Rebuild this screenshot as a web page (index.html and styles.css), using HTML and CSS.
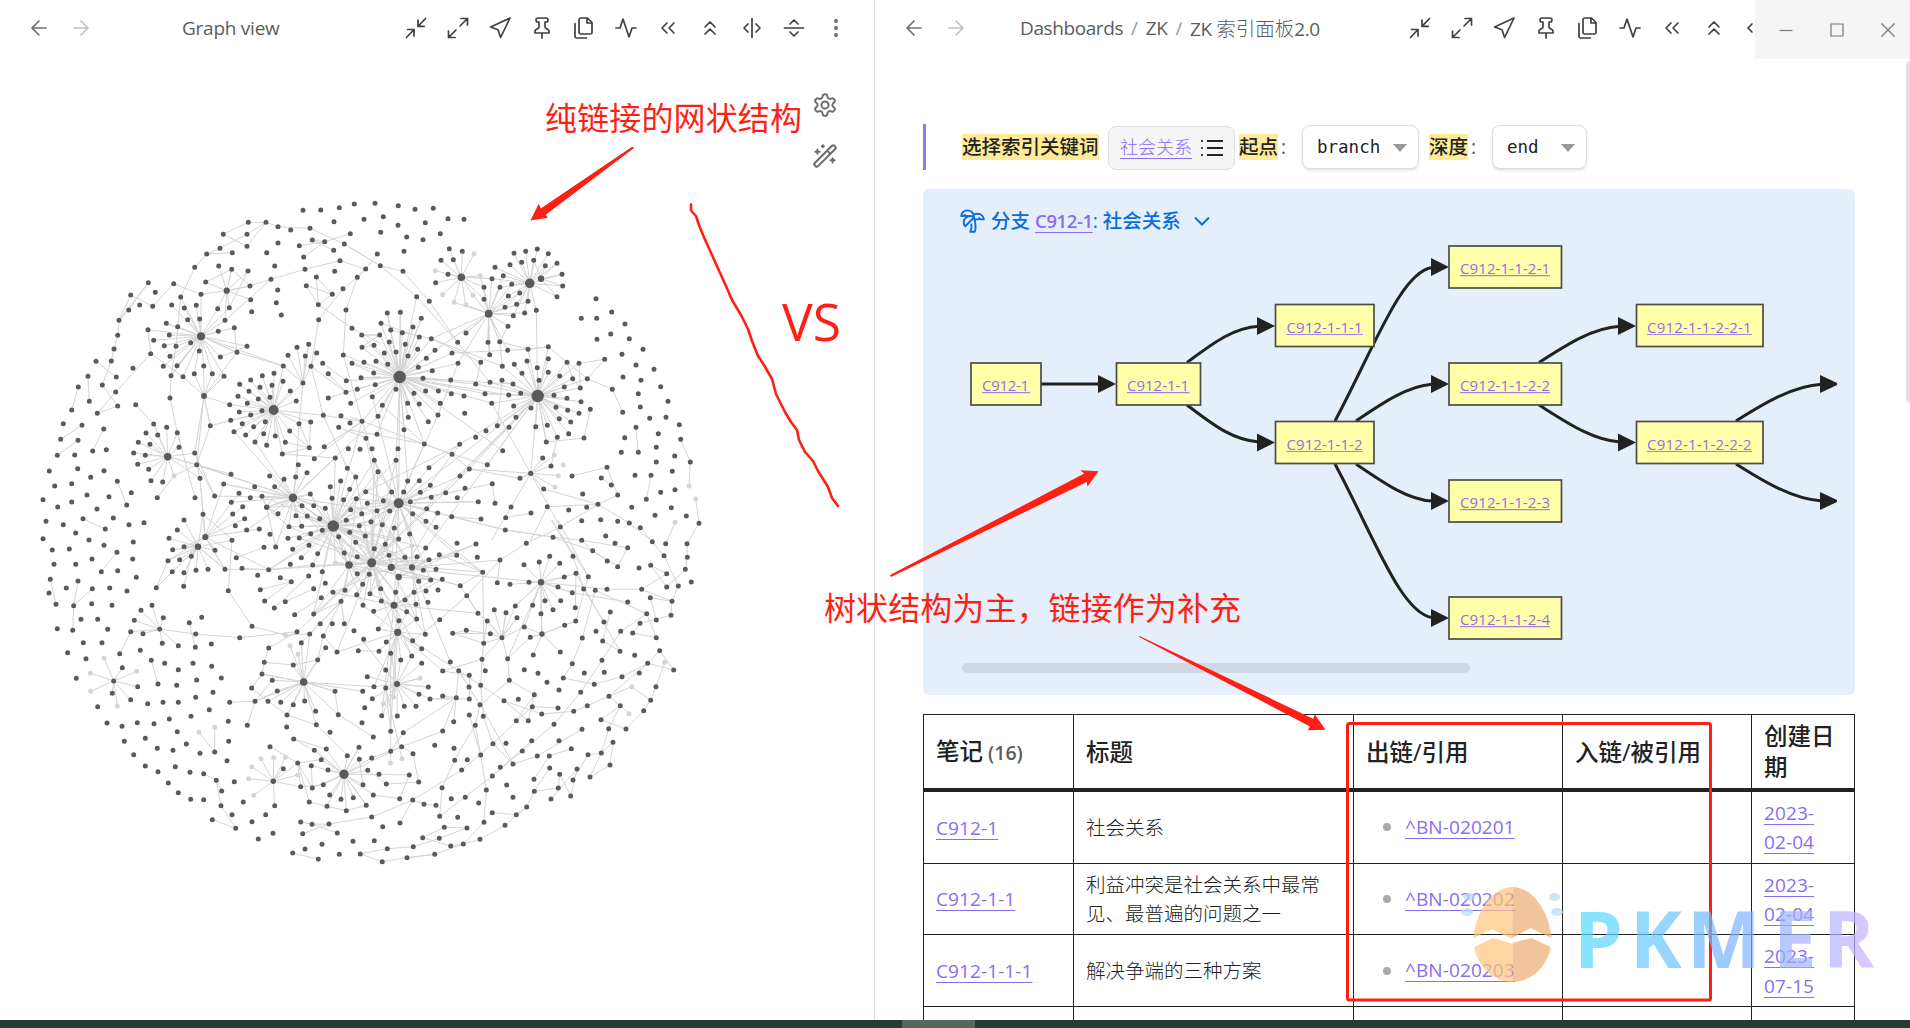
FILE: index.html
```html
<!DOCTYPE html>
<html lang="zh-CN">
<head>
<meta charset="utf-8">
<title>Graph view</title>
<link rel="stylesheet" href="styles.css">
</head>
<body>
<svg class="sprite" aria-hidden="true">
  <symbol id="i-back" viewBox="0 0 24 24"><path d="M19 12H5M12 19l-7-7 7-7"/></symbol>
  <symbol id="i-fwd" viewBox="0 0 24 24"><path d="M5 12h14M12 5l7 7-7 7"/></symbol>
  <symbol id="i-in" viewBox="0 0 24 24"><path d="M14 4v6.3h6.3M14 10.3l7.5-7.8M3.5 13.5H10V20M10 13.5l-7.5 8"/></symbol>
  <symbol id="i-out" viewBox="0 0 24 24"><path d="M15 2.5h6.5V9M21.500 2.500 14 10M9 21.500H2.500V15M2.500 21.500 10 14"/></symbol>
  <symbol id="i-nav" viewBox="0 0 24 24"><path d="M22 2 2.600 11l7.400 2.700 2.600 7.800z"/></symbol>
  <symbol id="i-pin" viewBox="0 0 24 24"><path d="M12 17v5M5 17h14v-1.760a2 2 0 0 0-1.110-1.790l-1.780-.9A2 2 0 0 1 15 10.760V6h1a2 2 0 0 0 0-4H8a2 2 0 0 0 0 4h1v4.760a2 2 0 0 1-1.110 1.790l-1.780.9A2 2 0 0 0 5 15.240Z"/></symbol>
  <symbol id="i-files" viewBox="0 0 24 24"><path d="M15.500 2H8.600c-.4 0-.8.2-1.100.5-.3.3-.5.7-.5 1.100v12.800c0 .4.2.8.5 1.100.3.3.7.5 1.100.5h9.800c.4 0 .8-.2 1.100-.5.3-.3.5-.7.5-1.100V6.500L15.500 2zM3 7.600v12.800c0 .4.2.8.5 1.100.3.3.7.5 1.100.5h9.800M15 2v5h5"/></symbol>
  <symbol id="i-act" viewBox="0 0 24 24"><path d="M22 12h-4l-3 9L9 3l-3 9H2"/></symbol>
  <symbol id="i-left" viewBox="0 0 24 24"><path d="m11 17-5-5 5-5M18 17l-5-5 5-5"/></symbol>
  <symbol id="i-up" viewBox="0 0 24 24"><path d="m17 11-5-5-5 5M17 18l-5-5-5 5"/></symbol>
  <symbol id="i-sh" viewBox="0 0 24 24"><path d="M12 2.500v19M8 8l-4 4 4 4M16 8l4 4-4 4"/></symbol>
  <symbol id="i-sv" viewBox="0 0 24 24"><path d="M2.500 12h19M8 8l4-4 4 4M8 16l4 4 4-4"/></symbol>
  <symbol id="i-dots" viewBox="0 0 24 24"><g fill="currentColor" stroke="none"><circle cx="12" cy="5" r="1.900"/><circle cx="12" cy="12" r="1.900"/><circle cx="12" cy="19" r="1.900"/></g></symbol>
</svg>

<div class="app">
  <div class="panes">
    <section class="pane pane-graph">
      <header class="bar">
        <svg class="ic nav"><use href="#i-back"/></svg>
        <svg class="ic nav off"><use href="#i-fwd"/></svg>
        <span class="title">Graph view</span>
        <div class="actions">
          <svg class="ic"><use href="#i-in"/></svg><svg class="ic"><use href="#i-out"/></svg>
          <svg class="ic"><use href="#i-nav"/></svg><svg class="ic"><use href="#i-pin"/></svg>
          <svg class="ic"><use href="#i-files"/></svg><svg class="ic"><use href="#i-act"/></svg>
          <svg class="ic"><use href="#i-left"/></svg><svg class="ic"><use href="#i-up"/></svg>
          <svg class="ic"><use href="#i-sh"/></svg><svg class="ic"><use href="#i-sv"/></svg>
          <svg class="ic dots"><use href="#i-dots"/></svg>
        </div>
      </header>
      <div class="canvas">
        <svg class="graph" viewBox="0 56 874 964">
          <path id="edges" class="g-edge"/>
          <path id="nodes" class="g-node"/>
          <path id="ghosts" class="g-ghost"/>
        </svg>
        <div class="tools">
          <svg class="tool" viewBox="0 0 24 24"><path d="M12.220 2h-.44a2 2 0 0 0-2 2v.18a2 2 0 0 1-1 1.730l-.43.25a2 2 0 0 1-2 0l-.15-.08a2 2 0 0 0-2.730.73l-.22.38a2 2 0 0 0 .73 2.730l.15.1a2 2 0 0 1 1 1.720v.51a2 2 0 0 1-1 1.740l-.15.09a2 2 0 0 0-.73 2.730l.22.38a2 2 0 0 0 2.730.73l.15-.08a2 2 0 0 1 2 0l.43.25a2 2 0 0 1 1 1.730V20a2 2 0 0 0 2 2h.44a2 2 0 0 0 2-2v-.18a2 2 0 0 1 1-1.730l.43-.25a2 2 0 0 1 2 0l.15.08a2 2 0 0 0 2.730-.73l.22-.39a2 2 0 0 0-.73-2.730l-.15-.08a2 2 0 0 1-1-1.740v-.5a2 2 0 0 1 1-1.740l.15-.09a2 2 0 0 0 .73-2.730l-.22-.38a2 2 0 0 0-2.730-.73l-.15.08a2 2 0 0 1-2 0l-.43-.25a2 2 0 0 1-1-1.730V4a2 2 0 0 0-2-2z"/><circle cx="12" cy="12" r="3.300"/></svg>
          <svg class="tool" viewBox="0 0 24 24"><path d="m21.640 3.640-1.280-1.280a1.210 1.210 0 0 0-1.720 0L2.360 18.640a1.210 1.210 0 0 0 0 1.720l1.280 1.280a1.200 1.200 0 0 0 1.720 0L21.640 5.360a1.200 1.200 0 0 0 0-1.720ZM14 7l3 3M5 6v4M19 14v4M10 2v2M7 8H3M21 16h-4M11 3H9"/></svg>
        </div>
      </div>
    </section>

    <section class="pane pane-note">
      <header class="bar">
        <svg class="ic nav"><use href="#i-back"/></svg>
        <svg class="ic nav off"><use href="#i-fwd"/></svg>
        <span class="crumbs"><span>Dashboards</span><i>/</i><span>ZK</span><i>/</i><span>ZK <em>索引面板</em>2.0</span></span>
        <div class="actions clipped">
          <svg class="ic"><use href="#i-in"/></svg><svg class="ic"><use href="#i-out"/></svg>
          <svg class="ic"><use href="#i-nav"/></svg><svg class="ic"><use href="#i-pin"/></svg>
          <svg class="ic"><use href="#i-files"/></svg><svg class="ic"><use href="#i-act"/></svg>
          <svg class="ic"><use href="#i-left"/></svg><svg class="ic"><use href="#i-up"/></svg>
          <svg class="ic"><use href="#i-sh"/></svg>
        </div>
        <div class="winctl">
          <svg viewBox="0 0 14 14"><path d="M.5 7.500h13"/></svg>
          <svg viewBox="0 0 14 14"><path d="M1 1h12v12H1z"/></svg>
          <svg viewBox="0 0 14 14"><path d="m.5.5 13 13M13.500.5l-13 13"/></svg>
        </div>
      </header>

      <div class="note">
        <div class="quote">
          <mark class="m1">选择索引关键词</mark>
          <div class="picker"><a>社会关系</a><svg viewBox="0 0 24 24"><path d="M7 5h16M7 12h16M7 19h16M1.200 5h1.600M1.200 12h1.600M1.200 19h1.600"/></svg></div>
          <mark class="m2">起点</mark><span class="colon">:</span>
          <div class="select s1">branch<b></b></div>
          <mark class="m3">深度</mark><span class="colon">:</span>
          <div class="select s2">end<b></b></div>
        </div>

        <div class="callout">
          <div class="callout-title">
            <svg class="palm" viewBox="0 0 24 24"><path d="M13 8c0-2.760-2.460-5-5.500-5S2 5.240 2 8h2l1-1 1 1h4M13 7.140A5.820 5.820 0 0 1 16.500 6c3.040 0 5.500 2.240 5.500 5h-3l-1-1-1 1h-3M5.890 9.710c-2.150 2.150-2.300 5.470-.35 7.430l4.240-4.250.7-.7.71-.71 2.120-2.120c-1.950-1.960-5.270-1.800-7.420.35M11 15.500c.5 2.500-.17 4.500-1 6.500h4c2-5.500-.5-12-1-14"/></svg>
            <span class="ct">分支 <a>C912-1</a>: 社会关系</span>
            <svg class="chev" viewBox="0 0 16 10"><path d="m1 1.500 7 7 7-7"/></svg>
          </div>
          <svg class="flow" viewBox="962 240 875 415">
            <g class="f-line">
              <path d="M1041 384H1100"/>
              <path d="M1187 362.500C1212 344 1232 328 1259 326.300"/>
              <path d="M1187 405C1212 424 1232 440 1259 442"/>
              <path d="M1335 421C1374 348 1401 272 1432 267.500"/>
              <path d="M1356 421C1384 402 1408 386 1432 384.300"/>
              <path d="M1356 464C1384 483 1408 500 1432 501"/>
              <path d="M1335 464C1374 537 1401 613 1432 617.500"/>
              <path d="M1539 362.500C1566 345 1592 328 1620 326.300"/>
              <path d="M1539 405C1566 422 1592 440 1620 442"/>
              <path d="M1736 421C1763 404 1792 386 1822 384.300"/>
              <path d="M1736 464C1763 481 1792 499 1822 501"/>
            </g>
            <g class="f-head">
              <path d="M1098 375l18 9-18 9z"/><path d="M1257 317l18 9-18 9z"/><path d="M1257 433.500l18 9-18 9z"/>
              <path d="M1431 258l18 9-18 9z"/><path d="M1431 375l18 9-18 9z"/><path d="M1431 492l18 9-18 9z"/><path d="M1431 609l18 9-18 9z"/>
              <path d="M1618 317l18 9-18 9z"/><path d="M1618 433.500l18 9-18 9z"/>
              <path d="M1820 375l17 8v2l-17 8z"/><path d="M1820 492l17 8v2l-17 8z"/>
            </g>
            <g class="f-box">
              <rect x="971" y="363" width="70" height="42"/><rect x="1116.500" y="363" width="84" height="42"/>
              <rect x="1275.500" y="304.500" width="98.500" height="42"/><rect x="1275.500" y="421.500" width="98.500" height="42"/>
              <rect x="1449" y="246" width="112.500" height="42"/><rect x="1449" y="363" width="112.500" height="42"/>
              <rect x="1449" y="480" width="112.500" height="42"/><rect x="1449" y="597" width="112.500" height="42"/>
              <rect x="1636.500" y="304.500" width="126.500" height="42"/><rect x="1636.500" y="421.500" width="126.500" height="42"/>
            </g>
            <g class="f-text">
              <text x="982" y="391" textLength="47">C912-1</text>
              <text x="1127" y="391" textLength="62">C912-1-1</text>
              <text x="1286.500" y="333" textLength="76">C912-1-1-1</text>
              <text x="1286.500" y="450" textLength="76">C912-1-1-2</text>
              <text x="1460" y="274" textLength="90">C912-1-1-2-1</text>
              <text x="1460" y="391" textLength="90">C912-1-1-2-2</text>
              <text x="1460" y="508" textLength="90">C912-1-1-2-3</text>
              <text x="1460" y="625" textLength="90">C912-1-1-2-4</text>
              <text x="1647" y="333" textLength="104.500">C912-1-1-2-2-1</text>
              <text x="1647" y="450" textLength="104.500">C912-1-1-2-2-2</text>
            </g>
            <path class="f-under" d="M982 392.700h48M1127 392.700h62.500M1286.500 334.500h76.500M1286.500 451.500h76.500M1460 275.700h90M1460 392.700h90M1460 509.700h90M1460 626.700h90M1647 334.500h105M1647 451.500h105"/>
          </svg>
          <div class="hscroll"></div>
        </div>

        <table class="links">
          <colgroup><col class="c1"><col class="c2"><col class="c3"><col class="c4"><col class="c5"></colgroup>
          <thead>
            <tr><th>笔记<small> (16)</small></th><th>标题</th><th>出链/引用</th><th>入链/被引用</th><th>创建日期</th></tr>
          </thead>
          <tbody>
            <tr class="first"><td><a>C912-1</a></td><td>社会关系</td><td><span class="li"><a>^BN-020201</a></span></td><td></td><td><a>2023-<br>02-04</a></td></tr>
            <tr class="short"><td><a>C912-1-1</a></td><td>利益冲突是社会关系中最常见、最普遍的问题之一</td><td><span class="li"><a>^BN-020202</a></span></td><td></td><td><a>2023-<br>02-04</a></td></tr>
            <tr><td><a>C912-1-1-1</a></td><td>解决争端的三种方案</td><td><span class="li"><a>^BN-020203</a></span></td><td></td><td><a>2023-<br>07-15</a></td></tr>
            <tr><td></td><td></td><td></td><td></td><td></td></tr>
          </tbody>
        </table>
      </div>
      <div class="vscroll"></div>
    </section>
  </div>
  <footer class="taskbar"><span></span></footer>
</div>

<svg class="overlay" viewBox="0 0 1910 1028">
  <defs>
    <linearGradient id="pk" gradientUnits="userSpaceOnUse" x1="1580" y1="0" x2="1875" y2="0">
      <stop offset="0" stop-color="#56dcff"/><stop offset=".5" stop-color="#78b4ff"/><stop offset="1" stop-color="#cdb2ff"/>
    </linearGradient>
  </defs>
  <g class="ink">
    <text class="note-text" x="545" y="129.500" textLength="257">纯链接的网状结构</text>
    <text class="note-text" x="824" y="620" textLength="417">树状结构为主，链接作为补充</text>
    <text class="vs" x="782" y="341" textLength="59" lengthAdjust="spacingAndGlyphs">VS</text>
    <path d="M632 147l2 .5-88.500 67.300 2.500 2.900-17.500 2.800 8.200-16.800 2.300 4.800z"/>
    <path d="M632 147l2 1-88.500 66.800-4.500-6.300z"/>
    <path d="M890 575l1 2 195.700-95 .8 4.500 11-15.200-18.200-1 4 3.200z"/>
    <path d="M1139.500 636l-.3 1L1310 726.500l-2.500 3.700 18 -.5-10.800-15.500-1.500 4.500z"/>
    <path class="stroke" d="M691 204.500v6l5 5.500 3 9 4 10 13 29 10 22 6 14 9 15 7 14 4 12 6 15 6 9 8 14 4 15 9 18 6 10 6 8 2 10 6 12 8 9 5 10 5 8 5 8 4 11 6 8"/>
    <rect class="frame" x="1347.500" y="723.500" width="363" height="276.500" rx="2"/>
  </g>
  <g class="mark">
    <path fill="#ffc67c" d="M1512.500 887c-21 0-37 26-39 51l19-9 9 5 11.500 5zM1474 947l19-9 19.500 6v38c-19 0-35-16-38.500-35z"/>
    <path fill="#ecac6f" d="M1512.500 887c21 0 37 26 39 51l-21-10-18 10zM1551 947l-20-9-18.500 5v39c19 0 35-16 38.500-35z"/>
    <g fill="#b4dcf2"><ellipse cx="1469" cy="897" rx="6" ry="4"/><ellipse cx="1467" cy="912" rx="6" ry="4"/><ellipse cx="1554.500" cy="897" rx="5.500" ry="4"/><ellipse cx="1557" cy="912" rx="6" ry="4"/></g>
    <text y="968" fill="url(#pk)" x="1574 1630 1687 1773 1823">PKMER</text>
  </g>
</svg>
<script src="graph.js"></script>
</body>
</html>
```

FILE: styles.css
```css
* { box-sizing: border-box; }
html, body { margin: 0; height: 100%; overflow: hidden; }
body {
  background: #fff;
  color: #222;
  font: 19.5px/29.25px "Open Sans", "Noto Sans", "Noto Sans CJK SC", sans-serif;
}
.sprite { position: absolute; width: 0; height: 0; }
a { color: #8a6cf0; text-decoration: underline; text-decoration-thickness: 1px; text-underline-offset: 4px; }

.app { display: flex; flex-direction: column; height: 1028px; }
.panes { display: flex; flex: 1; min-height: 0; }
.pane { display: flex; flex-direction: column; overflow: hidden; }
.pane-graph { width: 875px; border-right: 1px solid #ddd; }
.pane-note { flex: 1; position: relative; }

/* pane header */
.bar { display: flex; align-items: center; height: 56px; flex: none; padding-left: 27px; gap: 18px; color: #5c5c5c; }
.ic { width: 24px; height: 24px; flex: none; fill: none; stroke: currentColor; stroke-width: 1.7; color: #404040; stroke-linecap: round; stroke-linejoin: round; }
.nav { color: #707070; }
.off { color: #c0c0c0; }
.dots { color: #666; }
.title { margin: 2px 0 0 71px; font-size: 19px; letter-spacing: -.25px; }
.actions { display: flex; gap: 18px; margin-left: auto; }
.pane-graph .actions { padding-right: 26px; }
.crumbs { display: flex; margin: 2px 0 0 34px; font-size: 19px; letter-spacing: -.4px; white-space: nowrap; }
.crumbs i { font-style: normal; color: #999; margin: 0 8px; }
.crumbs em { font-style: normal; font-weight: 300; font-size: 19.5px; letter-spacing: 0; }
.clipped { width: 347px; overflow: hidden; flex: none; }
.bar .winctl { margin-left: -18px; }
.winctl { width: 155px; height: 59px; flex: none; align-self: flex-start; display: flex; align-items: center; gap: 37px; padding-left: 24px; background: #f5f5f5; }
.winctl svg { width: 14px; height: 14px; fill: none; stroke: #777; stroke-width: 1.2; }

/* graph */
.canvas { flex: 1; position: relative; }
.graph { display: block; width: 874px; height: 964px; }
.g-edge { fill: none; stroke: #d4d4d4; stroke-width: 1; }
.g-node { fill: #5a5a5a; }
.g-ghost { fill: #d5d5d5; }
.tools { position: absolute; right: 36px; top: 36px; display: flex; flex-direction: column; gap: 25px; }
.tool { width: 26px; height: 26px; fill: none; stroke: #6b6b6b; stroke-width: 1.8; stroke-linecap: round; stroke-linejoin: round; }

/* note body */
.note { padding: 68px 55px 0 48px; display: flex; flex-direction: column; }
.quote { display: flex; align-items: center; height: 46px; border-left: 3px solid #9476ee; padding-left: 36px; white-space: nowrap; }
mark { background: #ffea98; color: #222; height: 26px; line-height: 26px; font-weight: 500; flex: none; overflow: hidden; }
.m1 { width: 137px; }
.m2, .m3 { width: 39px; }
.m2 { margin-left: 4px; }
.m3 { margin-left: 11px; }
.colon { width: 24px; padding-left: 3px; color: #555; }
.picker { display: flex; align-items: center; width: 127px; height: 44px; margin: 2px 0 0 9px; padding-left: 11px; border: 1px solid #dedede; border-radius: 8px; background: #f5f5f5; }
.picker a { font-size: 18px; font-weight: 300; width: 72px; line-height: 24px; padding-bottom: 2px; }
.picker svg { width: 24px; height: 24px; margin-left: 8px; fill: none; stroke: #222; stroke-width: 2; }
.select { display: flex; align-items: center; height: 44px; padding-left: 14px; border: 1px solid #dcdcdc; border-radius: 8px; background: #fff; box-shadow: 0 2px 3px rgba(0,0,0,.1); font: 17.5px "DejaVu Sans Mono", monospace; }
.select b { margin-left: auto; margin-right: 11px; margin-top: 2px; border: 7px solid transparent; border-top: 8px solid #999; border-bottom: 0; }
.s1 { width: 117px; }
.m3 { margin-left: 10px; }
.s2 { width: 95px; }

.callout { height: 506px; margin-top: 19px; padding: 0 18px 0 39px; border-radius: 6px; background: #e5effc; display: flex; flex-direction: column; }
.callout-title { display: flex; align-items: center; height: 51px; padding-top: 12px; margin-left: -3px; color: #086ddd; font-weight: 500; }
.palm { width: 27px; height: 27px; fill: none; stroke: currentColor; stroke-width: 1.7; stroke-linecap: round; stroke-linejoin: round; }
.ct { margin-left: 5px; width: 191px; white-space: nowrap; }
.ct a { font-size: 18.5px; font-weight: 600; letter-spacing: -.4px; }
.chev { width: 16px; height: 10px; margin-left: 12px; fill: none; stroke: currentColor; stroke-width: 2; }
.flow { width: 875px; height: 415px; flex: none; }
.f-line { fill: none; stroke: #222; stroke-width: 3; }
.f-head { fill: #222; }
.f-box { fill: #ffffaa; stroke: #4c4c46; stroke-width: 1.7; }
.f-text { font-size: 15px; fill: #946ee0; }
.f-under { stroke: #a284e0; stroke-width: 1.2; }
.hscroll { width: 508px; height: 10px; margin-top: 8px; border-radius: 5px; background: #d0d8e4; }

.links { width: 931px; margin-top: 19px; border-collapse: collapse; table-layout: fixed; }
.c1 { width: 150px; } .c2 { width: 280px; } .c3 { width: 209px; } .c4 { width: 189px; } .c5 { width: 103px; }
.links th, .links td { border: 1px solid #222; padding: 0 12px; text-align: left; vertical-align: middle; }
.links th { height: 75px; padding-right: 0; padding-top: 2px; border-bottom: 4px solid #222; font-size: 23.5px; line-height: 31px; font-weight: 500; }
.links th:last-child { padding-right: 12px; }
.links th small { font-size: 19.5px; font-weight: 600; color: #5c5c5c; }
.links td { height: 72px; font-weight: 300; }
.links .first td { height: 74px; }
.links .short td { height: 71px; }
.links td a { font-size: 19px; font-weight: 400; line-height: 1; letter-spacing: .1px; }
.li { display: flex; align-items: center; padding-left: 17px; gap: 14px; }
.li::before { content: ""; width: 8px; height: 8px; border-radius: 50%; background: #aaa; }

.vscroll { position: absolute; right: 0; top: 61px; width: 4px; height: 342px; border-radius: 4px 0 0 4px; background: #e2e2e2; }
.taskbar { height: 8px; flex: none; background: #243c33; padding-left: 902px; }
.taskbar span { display: block; width: 73px; height: 8px; background: #54685f; }

/* annotations drawn over both panes */
.overlay { position: absolute; left: 0; top: 0; width: 1910px; height: 1028px; pointer-events: none; }
.ink { fill: #ff1f14; }
.note-text { font: 32px "Noto Sans CJK SC", sans-serif; }
.vs { font: 52px "Open Sans", sans-serif; }
.stroke { fill: none; stroke: #ff1f14; stroke-width: 2.6; stroke-linejoin: round; stroke-linecap: round; }
.frame { fill: none; stroke: #ff1f14; stroke-width: 3; }
.mark { opacity: .7; }
.mark text { font: 700 78px "Open Sans", sans-serif; }
```

FILE: graph.js
```js
// Node positions in thirds of a pixel, grouped into four tiles of the canvas.
// A trailing "g" marks an unresolved (ghost) note; hubs are listed separately.
const tiles = {
a: { ox: 20, oy: 180, n: `849,91 902,90 958,83 1003,72 1065,70 942,125 1032,118 685,127 738,127 774,140 812,150 870,145 991,161 610,163 681,163 877,180 914,185 973,192 774,189 838,197 681,199 600,205 941,211 637,218 740,218 560,222 851,231 1072,222 960,242 596,258 764,258 524,262 635,268 684,273 855,268 1037,267 944,274 889,291 1012,292 753,298 385,308 557,306 461,311 859,317 690,318 406,337 773,330 969,326 332,345 543,343 937,343 482,351 692,359 359,375 398,379 455,375 529,376 769,368 895,374 493,384 593,386 628,383 326,390 978,390 695,395 784,405 297,421 503,419 539,417 615,421 896,419 439,430 473,440 384,449 643,443 996,445 595,454 293,466 448,465 1025,465 401,481 512,488 433,497 468,499 681,499 831,502 866,493 1026,502 1062,496 282,507 538,513 651,517 392,521 450,529 804,526 856,528 890,519 970,525 601,531 228,544 274,543 908,550 996,550 1032,547 1068,544 430,559 471,557 551,558 790,558 873,559 339,565 523,581 577,581 762,580 925,581 1061,579 204,589 289,591 453,587 489,590 612,589 727,587 692,600 789,604 979,602 1023,593 247,615 659,613 849,609 756,616 1066,614 175,621 720,622 1012,628 287,636 687,634 811,633 978,637 654,649 750,652 450,654 715,657 925,654 1057,650 208,664 829,663 682,670 992,670 347,674 629,674 293,678 155,690 726,692 658,696 232,700 692,705 910,706 963,707 632,721 1074,709 736,725 872,726 1026,724 130,731 401,732 642,755 667,731 837,731 990,729 186,736 571,737 701,740 440,742 956,742 251,747 378,759 472,758 809,753 413,765 677,765 731,761 766,768 1071,763 122,778 174,781 1038,775 355,787 705,786 796,787 390,793 740,796 477,802 868,803 913,800 985,806 1020,808 1056,806 259,809 218,813 341,819 524,819 787,822 112,826 164,825 376,826 883,836 946,834 1063,841 353,853 530,854 835,854 173,866 386,868 982,865 252,872 861,878 1074,875 88,873 462,888g 633,883 749,888 827,891 212,892 540,895 792,898 1007,891 292,904 393,902 428,906 962,903 155,911 611,912 104,918 704,920 764,920 931,920 989,928 334,938 657,940 1037,935 871,942 201,945 584,948 726,949 267,950 412,953 525,953 691,953 936,955 971,959 1009,956 69,959 155,966 634,967 1042,970 320,975 846,977 881,977 113,981 668,980 740,982 231,987 916,985 992,989 1071,992 638,1002 774,1001 1025,1001 549,1003 828,1007 862,1008 189,1016 280,1014 674,1016 899,1016 492,1020 979,1021 78,1024 1053,1025 130,1034 327,1034 372,1028 646,1037 1018,1037 256,1047 472,1050 680,1050 718,1047 807,1040 845,1039 907,1051 167,1059 872,1061 750,1063 989,1057 1036,1068` },
b: { ox: 350, oy: 180, n: `145,77 195,88 250,85 100,110 226,128 294,116 342,118 144,136 92,157 271,161 170,171 219,179 162,214 298,206 337,214 372,221g 273,241 310,239 91,257 159,274 256,272g 294,283 391,287g 257,308 402,322 278,344g 369,346g 402,358 312,367g 347,374g 492,220 527,214 562,207 595,221 621,250 551,241 515,247 480,254 586,257 435,262 460,287 636,283 426,296 638,318 485,313 450,322 509,339 475,348 621,350 534,364 500,373 465,382 559,391 524,399 490,407 474,439 200,350 238,364 738,356 785,396 694,415 740,415 825,432 782,462 838,476 741,478 879,508 816,523 764,538 858,555 912,568 651,547 687,550 819,591 873,601 712,596 668,596 932,620 787,628 865,641 954,664 691,624 643,621 871,681 818,697 948,712 899,715 988,734 858,742 925,761 992,778 824,773 814,817 865,817 919,802 974,828 1021,846 919,846 967,874 855,886 903,886 1017,918g 754,894 771,862 784,915 932,937 975,929 1037,957g 889,958 803,945 698,942 845,982 964,983 744,973 710,982 915,1006 1009,1008 975,1027g 1047,1030 656,990 592,980 695,1022 752,1019 803,1024 838,1029 871,1043 631,1041 767,1068 112,399 151,397 214,415 93,430 189,441 122,450 157,458 208,471 244,476 89,465 118,486 166,493 203,508 255,511 103,519 138,516 174,528 229,535 306,519 323,487 348,459 414,487 449,485 324,550 392,547 419,524 473,511 534,508 595,500 113,553 205,562 247,572 219,595 302,600 138,628 192,640 227,633 265,633 304,641 342,648 173,670 208,672 271,670 97,676 264,705 344,700 175,712 235,725 162,749 223,792 144,806 329,793 306,823 138,841 237,863 358,867 412,854 330,888 173,903 208,902 241,916 427,911 125,936 161,936 211,937 287,938 345,925 100,962 181,965 244,952 322,953 385,965 435,970 119,993 188,1001 230,986 263,999 305,1010 393,1017 228,1024 97,1034 258,1042 133,1044 179,1062 457,559 493,553 531,543 595,536 562,563 516,580 595,577 629,588 567,601 456,601 420,607 489,612 377,612 405,641 476,645 512,640 612,646 651,655 693,665 425,670 491,678 543,684 618,682 653,691 687,700 721,688 498,712 628,716 662,726 442,737 477,742 557,740 592,736 408,752 377,772 656,761 622,772 702,774 589,786 458,812 578,834 613,825g 603,858 640,855g 542,880 625,887g 666,888 510,895 615,922g 581,927 483,981 543,999 467,1013 466,1050` },
c: { ox: 20, oy: 520, n: `69,56 207,60 252,76 340,66 97,90 148,87 291,97 216,117 338,117 102,133 167,133 244,155 293,152 349,172 91,178 174,183 139,204 217,206 269,204 321,213 87,219 161,257 215,251 276,256 108,253 183,298 233,298 112,326 158,331 263,328 190,368 246,368 143,398 198,416 307,443 169,475 252,414g 211,460g 350,454g 212,514g 292,558g 281,483 277,520 332,539 233,560 353,500 361,391 299,401 332,335 369,341 343,301 363,271 396,256 430,293 419,328 427,370 475,377 508,308 545,292 527,342 526,382 574,372 434,430 394,421 475,449 519,430 575,439 530,480 604,474 414,492 470,496 579,517 527,532 383,551 429,547 475,547 568,569 513,589 629,547 448,597 402,611 352,608 306,619 261,609 472,635 313,664 376,655 412,685 459,691 499,672 540,700 584,696 537,637g 584,622g 625,604 626,664 621,722 341,704 376,738 414,755 466,740 510,757 551,761 589,781 605,813 643,785 445,789 475,818 512,838 551,839 603,857 636,884 670,846 577,899 647,925 696,905 737,884 715,957 759,940 447,55 492,80 458,89 479,119 514,109 444,122 457,155 492,158 528,151 564,148 585,91 636,61 615,148 666,145 491,199 409,203 649,113 625,212 696,319 659,353 804,55 838,54 867,76 767,81 732,82 818,88 893,101 844,113 811,133 878,135 746,149 713,166 781,173 814,185 721,209 734,243 796,245 763,264 824,284 881,282 866,168 907,155 916,190 881,206 904,233 939,217 975,211 963,244 946,129g 973,99 1012,110 1007,67 1012,161 1048,163 1028,193 1010,224 1050,221 1029,256 1061,274 1063,86 956,50 901,311 937,311 973,311 1002,332 1075,327 831,335 869,342 910,348 844,368 796,345g 810,377g 834,403g 1031,358 917,383 951,396 1015,392 1077,394 746,384 733,427 820,435 893,420 726,462 757,481 695,504 772,513 705,544 744,544 782,547 820,554 854,543 945,514 1042,470 1062,500 1028,514 1057,536 1034,563 1026,608 1060,651 955,584 887,574 801,585 889,614 800,621 682,616 930,637 821,657 750,680 883,691 919,687 982,707 1017,682 904,719 1018,718 1055,714 833,729 874,737 924,750 1043,751 1077,763 790,746 842,800 877,804 910,794 1029,794 929,825 963,838 1000,833 1060,825 868,846 921,859 979,872 1039,856 760,784 723,716g 761,713g 796,712g 695,740g 686,776g 833,765g 701,826g 764,857 842,906 876,913 927,912 848,941 952,939 1055,891 999,964 1063,962 906,973 855,987 958,1003 1021,1002 818,999 895,1018` },
d: { ox: 350, oy: 520, n: `146,57 106,73 321,70 378,72 529,70 609,52 695,61 795,70 907,65 947,71 1011,71 833,83 728,92 942,107 1012,112 186,77g 227,84 117,106 165,112 201,110 268,104 320,106 382,112 237,119 450,120 522,134 568,126 599,109 629,130 669,109 772,123 803,140 867,144 902,136 1006,148 950,161 220,151 258,148 398,157 678,160 643,171 715,170 206,184 242,180 277,178 331,197 442,188 480,193 537,187 624,201 701,207 736,211 771,208 875,208 950,201 985,198 1024,186 92,206 137,217 192,217 228,213 264,210 350,227 667,218 901,233 966,244 94,243 165,240 198,253 234,247 496,258 548,256 585,242 632,242 833,246 676,263 433,269 468,278 609,269 781,276 890,281 963,286 170,275 384,280 501,293 573,281 147,302 200,297 269,299 412,303 677,303 762,306 919,300 870,310 523,321 644,316 738,334 812,334 848,339 226,343 308,340 349,331 421,341 456,353 541,352 576,342 697,354 758,363 919,353 188,362 109,366 401,370 215,386 631,396 810,394 929,392 122,400 185,408 152,420 550,405 854,406 396,418 473,416 301,426 215,430 667,431 756,421 893,430 944,427g 971,450 107,450 278,453 326,452 406,452 358,466 523,449 564,460 703,459 763,457 640,474 816,470 868,459 210,475g 478,481 591,487 733,493 845,500g 918,500 235,501 357,501 392,496 107,504 207,523 278,528 319,533 358,537 240,537 553,524 627,510 692,517 777,529 902,541 131,531g 505,538 462,542 390,554 547,560 624,564 712,557 811,557 881,572 837,581g 100,551g 163,559 198,559 575,582 671,574 95,587 142,588 358,585 400,589 311,605 376,616 499,602 535,602 612,613 753,599 828,627 776,626 122,634 160,638 278,633 696,628 429,671 468,670 545,662 627,662 789,667 155,680 254,676 312,685 122,694 189,701 392,705 517,693 664,686 562,708 598,708 714,704 754,699 156,716g 121,729g 314,721 352,719 335,750 451,742 489,732 599,744 681,747 780,735 720,771 427,768 552,778 629,763 669,780 178,765 109,792 206,786 276,803 470,795 553,814 625,804 662,828 603,837 409,810 304,836 346,832 149,836 188,840 222,853 258,856 386,849 489,832 530,861 269,889 323,892 427,878 499,884 150,909 98,920 402,907 465,916 283,922 351,924 218,953 268,955 390,958 190,980 112,986 302,978 340,972 171,1013 254,1003 97,1025` }
};

// tile, x, y, dot radius (px), radius of the star (thirds), reach and step of the long links
const hubs = [
['a',543,469,4,150,0,0],['a',620,332,3.1,90,0,0],['a',761,690,4.9,142,0,0],['a',443,830,3.7,118,0,0],['a',552,648,3,100,0,0],
['a',819,953,4.2,105,280,11],['a',740,982,2.8,50,190,8],['a',940,1038,5.8,165,330,9],
['b',334,292,3.8,102,0,0],['b',539,310,4.8,118,0,0],['b',573,296,3.2,75,0,0],['b',416,401,3.9,125,0,0],
['b',149,591,6.2,200,300,11],['b',563,648,6.2,160,260,12],['b',146,970,5,150,330,11],['b',542,880,2.6,100,0,0],
['c',534,80,3.2,118,0,0],['c',556,51,3.1,80,180,7],['c',987,135,3.8,80,260,10],['c',1055,128,4.5,140,330,9],
['c',851,486,3.8,130,0,0],['c',972,763,4.7,120,0,0],['c',760,784,2.7,92,0,0],['c',281,483,2.5,82,0,0],['c',419,328,2.5,84,0,0],
['d',124,142,3.6,60,220,11],['d',186,142,3.1,65,260,12],['d',146,171,3.2,60,260,10],['d',132,256,3.5,90,230,11],
['d',143,337,3.6,95,200,9],['d',573,187,3.2,105,0,0],['d',141,492,3,100,0,0],['d',456,353,2.5,80,0,0],['d',576,342,2.7,70,0,0]
];

const lines = {
a: `610,163 685,127 738,127 774,140 870,145 973,192 1081,257|610,163 681,199 738,127 681,163 600,205|560,222 637,218|560,222 524,262 482,351|600,205 560,222|877,180 941,211|851,231 914,185 838,197|914,185 991,161|877,180 914,185|753,298 855,268 960,242 1037,267 1072,222|690,318 753,298 615,421|557,306 635,268 690,318|635,268 620,332|620,332 690,318|628,383 684,273|889,291 895,374 937,343 859,317 895,374|889,291 937,343|1037,267 1012,292 978,390 970,525 1026,724 1074,875|896,419 969,326 1012,292|895,374 996,445 1080,490|896,419 873,559 910,706 982,865 1007,891|332,345 398,379 461,311 543,343|385,308 326,390 297,421 385,308|332,345 297,421 293,466 282,507 274,543 247,615 293,678 232,700 287,636 392,521|228,544 289,591|204,589 208,664|175,621 155,690|122,778 186,736|112,826 174,781|251,747 218,813|292,904 320,975|189,1016 256,1047|412,953 462,888 530,854|347,674 401,732|482,351 468,499 453,587 450,654 472,758 525,953|384,449 392,521 489,590|384,449 543,469|643,443 651,517 552,648|681,499 601,531|543,469 651,517 790,558 849,609|543,469 790,558|543,469 453,587|543,469 439,430|849,609 804,526|849,609 831,502|849,609 866,493|849,609 856,528|849,609 890,519|849,609 837,731 827,891|873,559 978,637|908,550 979,602|925,581 978,637 925,654|761,690 910,706 1026,724|571,737 761,690|552,648 571,737 530,854 540,895 549,1003|552,648 530,854 819,953|552,648 524,819|552,648 612,589|530,854 584,948|443,830 530,854 633,883|524,819 584,948|868,803 872,726|868,803 837,731|868,803 809,753|868,803 796,787|868,803 787,822|883,836 1026,724|819,953 1074,709|819,953 946,834 787,822|946,834 940,1038|913,800 1026,724|819,953 861,878|956,742 1038,775 1080,980|819,953 530,854|611,912 819,953|540,895 556,1070|1023,593 1080,590|1026,502 1062,496|1025,465 1077,465|996,550 1060,579|549,1003 640,1080`,
b: `0,203 91,257 159,274 238,364 323,487|91,257 200,350 323,487 419,607|46,267 21,292|348,459 416,401 244,476|416,401 414,487 419,524|416,401 255,511|416,401 324,550 264,705 173,903|416,401 449,485|474,439 449,485 534,508 595,500 651,547 668,596 691,624|595,500 534,508 306,519|687,550 691,624|687,550 764,538|712,596 764,538|712,596 787,628 818,697|712,596 651,547|721,688 702,774 589,786 563,648|858,742 865,817|903,886 889,958|992,778 1021,846 1017,918|1037,957 1047,1030 1011,1091|975,1027 947,1091|666,888 771,862 803,945 744,973 631,1041|754,894 784,915|542,880 425,670|542,880 483,981 425,1080|542,880 631,1041|592,980 543,1080|592,980 744,973 838,1029 907,1085|581,927 744,973|467,1013 543,999|427,911 435,970|358,867 510,895 542,880|542,880 358,867 306,823 0,710|223,792 306,823 412,854|149,591 377,612 563,648|149,591 405,641 563,648|149,591 425,670|149,591 476,645|149,591 489,612|563,648 358,867 173,1044|563,648 329,793 237,863|563,648 330,888 146,970|149,591 146,970|149,591 138,841|149,591 162,749 173,903|149,591 458,812|122,450 244,476 392,547|244,476 457,559|112,399 149,591|151,397 149,591|214,415 149,591|36,501 89,465 35,465|93,430 208,471|0,750 223,792|97,676 223,792|457,559 449,485|456,601 442,737|392,547 377,612|146,970 427,911|146,970 385,965|622,772 603,858|146,970 466,1050 609,1071 695,1081|305,1010 393,1017|0,960 330,793|146,970 563,648`,
c: `291,97 244,155|91,178 108,253|174,183 161,257 158,331|161,257 217,206|332,335 299,401|332,335 419,328 527,342 659,353 831,335|508,308 526,382|394,421 414,492|409,203 457,155 534,80|444,122 409,203|514,109 491,199|556,51 615,148 534,80|615,148 746,149|636,61 625,212 696,319 796,345 869,342|666,145 746,149 878,135|746,149 556,51|537,637 584,696 584,622|551,761 589,781 605,813|589,781 603,857 647,925 577,899|746,384 733,427 820,435 893,420 910,348|746,384 831,335|733,427 726,462 695,504 744,544 801,585 889,614 982,707|726,462 851,486 1062,500|757,481 705,544 682,616|629,547 705,544 851,486|705,544 772,513|851,486 889,614|851,486 955,584 945,514|945,514 851,486 1028,514|955,584 1060,651|851,486 869,342|851,486 893,420|844,368 963,244|746,149 867,76|910,348 963,244|649,113 732,82|721,209 814,185|734,243 814,185 781,173|763,264 866,168|824,284 904,233|796,245 881,206|881,282 963,244|821,657 883,691 972,763|821,657 919,687|750,680 833,729 904,719|833,729 877,804 874,737|833,729 868,846 921,859 979,872 1039,856 972,763|842,800 833,729|842,800 910,794|842,906 876,913 927,912 1055,891 1178,840|876,913 952,939|848,941 927,912|1017,682 972,763|1018,718 1029,794|818,999 895,1018|1021,1002 1102,986 1180,980|1021,1002 1087,1025 1161,1013 1244,1003|1055,714 1145,680|1015,392 1077,394|951,396 910,348|987,135 963,244 901,311|1055,128 963,244 869,342|963,244 973,311`,
d: `64,128 329,-227|64,128 563,-372|64,128 398,157|64,128 358,-153|64,128 131,337|146,-50 132,256|146,-50 398,157|186,142 450,120|186,142 563,-372|124,142 573,187|132,256 384,280|132,256 278,178|146,171 122,634|186,142 301,426|-50,18 228,84|-50,18 124,142 331,197|141,492 235,501|141,492 210,475|141,492 107,450 36,360|107,504 122,634 122,694|122,400 122,634|141,492 240,537 358,537|107,504 156,716|122,694 121,729|132,256 95,587|143,337 107,504|240,537 319,533 278,528|207,523 141,492|142,492 95,587|143,337 278,453 396,418 456,353|278,453 358,466 358,537|326,452 357,501|326,452 390,554 376,616 312,721|326,452 311,605|143,337 326,452 392,496 462,542 535,602|392,496 400,589 429,671 489,732|406,452 396,418|401,370 396,418 392,496|384,280 412,303 401,370|331,197 384,280|350,227 384,280|350,227 450,120 442,188|450,120 529,70 631,21|331,197 398,157 401,370|398,157 268,104|398,157 320,106|308,340 349,331 421,341 308,340 401,370|188,362 269,299 350,227|456,353 433,269|456,353 468,278|456,353 412,303|456,353 501,293|456,353 496,258 573,187|473,416 541,352 576,342 631,396|473,416 573,187|523,321 573,187 576,342|478,481 473,416|478,481 553,524 535,602|499,602 553,524|478,481 392,554|462,542 575,582 671,574 712,557 777,529 893,430 929,392 971,450|547,560 624,564|777,529 811,557 753,599 828,627 881,572 902,541 918,500 944,427|845,500 777,529|845,500 902,541|837,581 811,557|893,430 971,450|640,474 733,493 816,470 893,430|640,474 667,431 697,354 736,211|756,421 692,517 612,613 517,693 427,768|756,421 812,334 890,281|810,394 758,363 781,276|762,306 701,207 669,109|810,394 678,160|919,353 890,281 736,211|919,300 901,233 966,244 963,286 870,310 848,339 919,353|875,208 966,244 985,198 942,107 871,23|875,208 771,208 573,187|875,208 950,161 902,136|833,83 803,140 728,92 695,61 833,83|609,52 728,92 772,123|609,52 466,30|1011,71 1012,112 1006,148 950,201|950,201 902,136|678,160 676,263|715,170 677,303 576,342|715,170 605,0|715,170 624,0|669,109 605,0|678,160 643,171 573,187|573,187 667,218 833,246|576,342 677,303|429,671 545,560 547,560|696,628 562,708 489,732 392,554|664,686 598,708 552,778|599,744 553,814 530,861 499,884 427,878|553,814 625,804 629,763 662,828 681,747 603,837|669,780 714,704 754,699 789,667 780,735 720,771|776,626 754,699 720,771|776,626 811,557|392,705 409,810 402,907 340,972|392,705 358,585|392,705 376,616|276,803 314,721|276,803 269,889 427,768|155,680 278,633 319,533|155,680 189,701 206,786 109,792 54,751|89,763 178,765 149,836 71,825|188,840 335,750 427,671|188,840 222,853 258,856|188,840 150,909|218,953 283,922 351,924 268,955|218,953 302,978 340,972 390,958 465,916 530,861|190,980 268,955|171,1013 254,1003 340,972|122,694 160,638 319,533|0,755 155,680|427,768 545,662`
};

const dots = [], solid = [], ghost = [], strokes = [];
const at = (k, x, y) => [tiles[k].ox + x / 3, tiles[k].oy + y / 3];
const disc = ([x, y], r) => `M${(x - r).toFixed(1)} ${y.toFixed(1)}a${r} ${r} 0 1 0 ${2 * r} 0a${r} ${r} 0 1 0 ${-2 * r} 0`;
for (const k in tiles) {
  for (const t of tiles[k].n.split(' ')) {
    const p = at(k, ...t.replace('g', '').split(',').map(Number));
    const g = t.endsWith('g');
    dots.push(p);
    (g ? ghost : solid).push(disc(p, 2.5));
  }
  for (const l of lines[k].split('|')) {
    strokes.push('M' + l.split(' ').map(t => at(k, ...t.split(',').map(Number)).map(v => v.toFixed(1)).join(' ')).join('L'));
  }
}
for (const [k, x, y, r, star, reach, step] of hubs) {
  const h = at(k, x, y);
  solid.push(disc(h, r));
  dots.forEach((p, i) => {
    const d = Math.hypot(p[0] - h[0], p[1] - h[1]) * 3;
    if (d < star || (d < reach && i % step === 0)) strokes.push(`M${h.map(v => v.toFixed(1)).join(' ')}L${p.map(v => v.toFixed(1)).join(' ')}`);
  });
}
document.getElementById('edges').setAttribute('d', strokes.join(''));
document.getElementById('nodes').setAttribute('d', solid.join(''));
document.getElementById('ghosts').setAttribute('d', ghost.join(''));
```
